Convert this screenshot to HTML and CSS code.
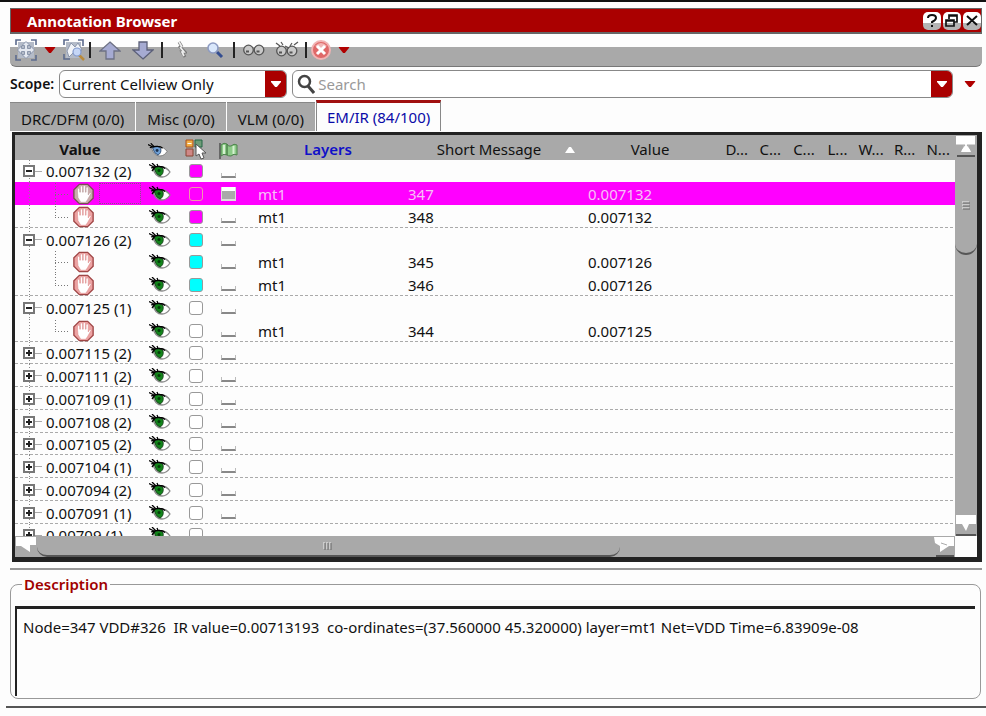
FILE: index.html
```html
<!DOCTYPE html>
<html lang="en">
<head>
<meta charset="utf-8">
<title>Annotation Browser</title>
<link rel="stylesheet" href="styles.css">
</head>
<body>
<svg class="defs" aria-hidden="true">
  <symbol id="eye" viewBox="0 0 22 16">
    <path d="M4 5c1 5 4 9 9 9 4 0 6-2 8-5-2-3-5-5-9-5-3-1-6 0-8 1z" fill="#fff" stroke="#888" stroke-width="1.300"/>
    <path d="M5 5q6-3 9 1 1 5-3 7-4-1-6-8z" fill="#12851a" stroke="#1c4a20"/>
    <circle cx="10" cy="7.500" r="1.500" fill="#053b08"/>
    <path d="M0 1.500l6 3M3 0l4 4M8 1l1 2.500M2 5q5-2 9-1.500 3 0 5 2M3 8l3-4" fill="none" stroke="#000" stroke-width="1.300"/>
  </symbol>
  <symbol id="hand" viewBox="0 0 24 24">
    <path d="M7.500 1.500h9l6 6v9l-6 6h-9l-6-6v-9z" fill="#eda3a3" stroke="#a04646" stroke-width="1.500"/>
    <path class="palm" d="M5.500 11V6.500q1.200-1.500 2.400 0V10h.7V4q1.200-1.500 2.400 0v6h.7V3.500q1.200-1.500 2.400 0V10h.7V5q1.200-1.500 2.400 0v8l1.500-2.500q1.800-.5 1.500 1L16.500 18l-2 3H9l-3-5z" fill="#fff" stroke="#dc8c8c" stroke-width=".6"/>
  </symbol>
  <symbol id="glasses" viewBox="0 0 22 12">
    <g fill="#c9c9c9" stroke="#555" stroke-width="1.3"><circle cx="5.500" cy="6" r="4.800"/><circle cx="16" cy="6" r="4.800"/></g>
    <path d="M3 7.500h3M13.500 7.500h3" stroke="#555" stroke-width="2"/>
  </symbol>
  <symbol id="down" viewBox="0 0 12 7"><path d="M0 0h12v1L7 7H5L0 1z"/></symbol>
</svg>

<main class="dock">
  <header class="title">
    <h1>Annotation Browser</h1>
    <button aria-label="Help"><svg viewBox="0 0 18 18"><path d="M5 6q0-3 4-3t4 3q0 2-4 4v1M9 13v2" fill="none" stroke="#111" stroke-width="2"/></svg></button>
    <button aria-label="Float"><svg viewBox="0 0 18 18"><path d="M6 7V3h8v7h-3M6 4h8M3 8h8v6H3zM3 9h8" fill="none" stroke="#111" stroke-width="1.700"/></svg></button>
    <button aria-label="Close"><svg viewBox="0 0 18 18"><path d="M4 4l10 9M14 4L4 13" stroke="#111" stroke-width="2"/></svg></button>
  </header>

  <div class="toolbar" role="toolbar" aria-label="Annotation tools">
    <button aria-label="Fit view"><svg width="22" height="22" viewBox="0 0 22 22"><path d="M3 3h16v16H3z" fill="#b4bbc8"/><path d="M1 6V1h5M16 1h5v5M21 16v5h-5M6 21H1v-5" fill="none" stroke="#5d6c8e" stroke-width="1.600"/><path d="M11 2.500l4 4h-2.500v3h3V7l4 4-4 4v-2.500h-3v3H15l-4 4-4-4h2.500v-3h-3V15l-4-4 4-4v2.500h3v-3H7z" fill="#e4e8f0" stroke="#7b88a0" stroke-width=".8"/></svg></button>
    <button class="menu" aria-label="Fit options"><svg width="12" height="6"><use href="#down"/></svg></button>
    <button aria-label="Zoom to selection"><svg width="22" height="22" viewBox="0 0 22 22"><path d="M3 3h15v16H3z" fill="#b4bbc8"/><path d="M1 6V1h5M15 1h5v6M7 20H1v-5" fill="none" stroke="#5d6c8e" stroke-width="1.600"/><path d="M4 12l4-8 4 4 3-4 4 7-8 2-5 5z" fill="#f2f4f8" stroke="#7b88a0" stroke-width=".8"/><path d="M16 16l5 5" stroke="#b98a3a" stroke-width="2.500"/><circle cx="14" cy="13" r="4" fill="#c5d6f6" stroke="#8299cc" stroke-width="1.200"/></svg></button>
    <span class="bar"></span>
    <button class="wide" aria-label="Previous"><svg width="22" height="19" viewBox="0 0 22 19"><path d="M11 1l10 9h-6v8H7v-8H1z" fill="#a6abd2" stroke="#6d7184" stroke-width="1.300"/></svg></button>
    <button class="wide" aria-label="Next"><svg width="22" height="19" viewBox="0 0 22 19"><path d="M11 18l10-9h-6V1H7v8H1z" fill="#a6abd2" stroke="#5c6079" stroke-width="1.300"/></svg></button>
    <span class="bar"></span>
    <button class="wide" aria-label="Probe"><svg width="10" height="18" viewBox="0 0 10 18"><path d="M2 1l3 5M2 5l6 6H5l3 5" fill="none" stroke="#777" stroke-width="3"/><path d="M2 1l3 5M3 6l4 5H5l2 4" fill="none" stroke="#eee" stroke-width="1.700"/></svg></button>
    <button class="wide" aria-label="Find"><svg width="18" height="18" viewBox="0 0 18 18"><path d="M11 11l5 5" stroke="#334d91" stroke-width="3"/><circle cx="7" cy="7" r="5" fill="#d9e7fb" stroke="#8d9bc2" stroke-width="1.600"/></svg></button>
    <span class="bar"></span>
    <button class="wide" aria-label="Show"><svg width="22" height="12"><use href="#glasses"/></svg></button>
    <button class="wide" aria-label="Hide"><svg width="24" height="18" viewBox="0 0 24 18"><use href="#glasses" x="1" y="4" width="22" height="12"/><path d="M1 2l4 3M23 1l-4 3M6 1l2 3M17 2l-2 3M10 5l4 2" stroke="#555" stroke-width="1.200"/></svg></button>
    <span class="bar"></span>
    <button aria-label="Delete"><svg width="20" height="20" viewBox="0 0 20 20"><circle cx="10" cy="10" r="9" fill="#df6868" stroke="#f1b3b3" stroke-width="2"/><path d="M4 6q6-6 12 0L10 9z" fill="#f2b5b5"/><path d="M6 6l8 8M14 6l-8 8" stroke="#fff" stroke-width="3"/></svg></button>
    <button class="menu" aria-label="Delete options"><svg width="12" height="6"><use href="#down"/></svg></button>
  </div>

  <div class="filters">
    <label for="scope">Scope:</label>
    <span class="field scope">
      <select id="scope"><option>Current Cellview Only</option></select>
      <span class="drop"><svg width="10" height="6"><use href="#down"/></svg></span>
    </span>
    <span class="field search">
      <svg class="lens" width="18" height="20" viewBox="0 0 18 20"><path d="M11 12l6 7" stroke="#444" stroke-width="3"/><circle cx="7.500" cy="7.500" r="5.500" fill="none" stroke="#444" stroke-width="2.500"/></svg>
      <input type="text" placeholder="Search" aria-label="Search">
      <button class="drop" aria-label="Search history"><svg width="10" height="6"><use href="#down"/></svg></button>
    </span>
    <button class="menu more" aria-label="Search options"><svg width="12" height="6"><use href="#down"/></svg></button>
  </div>

  <div class="tabs" role="tablist">
    <button role="tab">DRC/DFM (0/0)</button>
    <button role="tab">Misc (0/0)</button>
    <button role="tab">VLM (0/0)</button>
    <button role="tab" aria-selected="true">EM/IR (84/100)</button>
  </div>

  <section class="frame">
    <div class="view">
      <table>
        <colgroup><col class="c-tree"><col class="c-eye"><col class="c-color"><col class="c-flag"><col class="c-layer"><col class="c-msg"><col class="c-value"><col><col><col><col><col><col><col></colgroup>
        <thead>
          <tr>
            <th class="strong">Value</th>
            <th><svg width="20" height="15" viewBox="0 0 22 16" aria-label="Visible"><path d="M4 5c1 5 4 9 9 9 4 0 6-2 8-5-2-3-5-5-9-5-3-1-6 0-8 1z" fill="#fff" stroke="#777"/><path d="M5 5q6-3 9 1 1 5-3 7-4-1-6-8z" fill="#6f9fd4" stroke="#2d4a70"/><circle cx="10" cy="8" r="1.600" fill="#1d3350"/><path d="M0 1.500l6 3M3 0l4 4M2 5q5-2 9-1.500 3 0 5 2" fill="none" stroke="#000" stroke-width="1.300"/></svg></th>
            <th><svg width="22" height="21" viewBox="0 0 22 21" aria-label="Color"><path d="M1 1h7v7H1z" fill="#f0ad45" stroke="#a8501c"/><path d="M2.500 4.500h4" stroke="#fff"/><path d="M10 1h7v7h-7z" fill="#6f9c78" stroke="#264"/><path d="M1 10h7v7H1z" fill="#cf8886" stroke="#843"/><path d="M11 5v12l3-2 2 5 3-1-2-5h4z" fill="#fff" stroke="#555"/></svg></th>
            <th class="left"><svg width="19" height="17" viewBox="0 0 19 17" aria-label="Flag"><path d="M1 1v16" stroke="#444" stroke-width="1.300"/><path d="M2 3q3-3 6-1v11q-3-2-6 1zM8 2q1 3 4 2 3-3 6-1v10q-3-2-6 1-3 0-4-1z" fill="#8ccb88" stroke="#4c824b"/><path d="M5 3v9M14.500 4v8" stroke="#d5f0d0" stroke-width="2"/></svg></th>
            <th class="blue">Layers</th>
            <th class="sorted"><span>Short Message</span><svg width="10" height="6" viewBox="0 0 10 6"><path d="M0 6l4-6h2l4 6z" fill="#fff"/></svg></th>
            <th>Value</th><th>D...</th><th>C...</th><th>C...</th><th>L...</th><th>W...</th><th>R...</th><th>N...</th>
          </tr>
        </thead>
        <tbody>
          <tr><td class="node"><div><button class="box" aria-label="Collapse"></button><span>0.007132 (2)</span></div></td><td><svg class="eye"><use href="#eye"/></svg></td><td><input type="checkbox" class="color magenta" aria-label="Color"></td><td><input type="checkbox" class="flag" aria-label="Flag"></td><td colspan="10"></td></tr>
          <tr class="selected"><td class="node leaf"><div><i></i><svg class="hand"><use href="#hand"/></svg><b></b></div></td><td><svg class="eye"><use href="#eye"/></svg></td><td><input type="checkbox" class="color magenta" aria-label="Color"></td><td><input type="checkbox" class="flag" aria-label="Flag" checked></td><td>mt1</td><td>347</td><td>0.007132</td><td colspan="7"></td></tr>
          <tr class="end"><td class="node leaf"><div><i class="last"></i><svg class="hand"><use href="#hand"/></svg></div></td><td><svg class="eye"><use href="#eye"/></svg></td><td><input type="checkbox" class="color magenta" aria-label="Color"></td><td><input type="checkbox" class="flag" aria-label="Flag"></td><td>mt1</td><td>348</td><td>0.007132</td><td colspan="7"></td></tr>
          <tr><td class="node"><div><button class="box" aria-label="Collapse"></button><span>0.007126 (2)</span></div></td><td><svg class="eye"><use href="#eye"/></svg></td><td><input type="checkbox" class="color cyan" aria-label="Color"></td><td><input type="checkbox" class="flag" aria-label="Flag"></td><td colspan="10"></td></tr>
          <tr><td class="node leaf"><div><i></i><svg class="hand"><use href="#hand"/></svg></div></td><td><svg class="eye"><use href="#eye"/></svg></td><td><input type="checkbox" class="color cyan" aria-label="Color"></td><td><input type="checkbox" class="flag" aria-label="Flag"></td><td>mt1</td><td>345</td><td>0.007126</td><td colspan="7"></td></tr>
          <tr class="end"><td class="node leaf"><div><i class="last"></i><svg class="hand"><use href="#hand"/></svg></div></td><td><svg class="eye"><use href="#eye"/></svg></td><td><input type="checkbox" class="color cyan" aria-label="Color"></td><td><input type="checkbox" class="flag" aria-label="Flag"></td><td>mt1</td><td>346</td><td>0.007126</td><td colspan="7"></td></tr>
          <tr><td class="node"><div><button class="box" aria-label="Collapse"></button><span>0.007125 (1)</span></div></td><td><svg class="eye"><use href="#eye"/></svg></td><td><input type="checkbox" class="color" aria-label="Color"></td><td><input type="checkbox" class="flag" aria-label="Flag"></td><td colspan="10"></td></tr>
          <tr class="end"><td class="node leaf"><div><i class="last"></i><svg class="hand"><use href="#hand"/></svg></div></td><td><svg class="eye"><use href="#eye"/></svg></td><td><input type="checkbox" class="color" aria-label="Color"></td><td><input type="checkbox" class="flag" aria-label="Flag"></td><td>mt1</td><td>344</td><td>0.007125</td><td colspan="7"></td></tr>
          <tr class="end"><td class="node"><div><button class="box closed" aria-label="Expand"></button><span>0.007115 (2)</span></div></td><td><svg class="eye"><use href="#eye"/></svg></td><td><input type="checkbox" class="color" aria-label="Color"></td><td><input type="checkbox" class="flag" aria-label="Flag"></td><td colspan="10"></td></tr>
          <tr class="end"><td class="node"><div><button class="box closed" aria-label="Expand"></button><span>0.007111 (2)</span></div></td><td><svg class="eye"><use href="#eye"/></svg></td><td><input type="checkbox" class="color" aria-label="Color"></td><td><input type="checkbox" class="flag" aria-label="Flag"></td><td colspan="10"></td></tr>
          <tr class="end"><td class="node"><div><button class="box closed" aria-label="Expand"></button><span>0.007109 (1)</span></div></td><td><svg class="eye"><use href="#eye"/></svg></td><td><input type="checkbox" class="color" aria-label="Color"></td><td><input type="checkbox" class="flag" aria-label="Flag"></td><td colspan="10"></td></tr>
          <tr class="end"><td class="node"><div><button class="box closed" aria-label="Expand"></button><span>0.007108 (2)</span></div></td><td><svg class="eye"><use href="#eye"/></svg></td><td><input type="checkbox" class="color" aria-label="Color"></td><td><input type="checkbox" class="flag" aria-label="Flag"></td><td colspan="10"></td></tr>
          <tr class="end"><td class="node"><div><button class="box closed" aria-label="Expand"></button><span>0.007105 (2)</span></div></td><td><svg class="eye"><use href="#eye"/></svg></td><td><input type="checkbox" class="color" aria-label="Color"></td><td><input type="checkbox" class="flag" aria-label="Flag"></td><td colspan="10"></td></tr>
          <tr class="end"><td class="node"><div><button class="box closed" aria-label="Expand"></button><span>0.007104 (1)</span></div></td><td><svg class="eye"><use href="#eye"/></svg></td><td><input type="checkbox" class="color" aria-label="Color"></td><td><input type="checkbox" class="flag" aria-label="Flag"></td><td colspan="10"></td></tr>
          <tr class="end"><td class="node"><div><button class="box closed" aria-label="Expand"></button><span>0.007094 (2)</span></div></td><td><svg class="eye"><use href="#eye"/></svg></td><td><input type="checkbox" class="color" aria-label="Color"></td><td><input type="checkbox" class="flag" aria-label="Flag"></td><td colspan="10"></td></tr>
          <tr class="end"><td class="node"><div><button class="box closed" aria-label="Expand"></button><span>0.007091 (1)</span></div></td><td><svg class="eye"><use href="#eye"/></svg></td><td><input type="checkbox" class="color" aria-label="Color"></td><td><input type="checkbox" class="flag" aria-label="Flag"></td><td colspan="10"></td></tr>
          <tr class="end"><td class="node"><div><button class="box closed" aria-label="Expand"></button><span>0.00709 (1)</span></div></td><td><svg class="eye"><use href="#eye"/></svg></td><td><input type="checkbox" class="color" aria-label="Color"></td><td><input type="checkbox" class="flag" aria-label="Flag"></td><td colspan="10"></td></tr>
        </tbody>
      </table>
    </div>
    <div class="vscroll">
      <button aria-label="Scroll up"><svg width="22" height="24" viewBox="0 0 22 24"><path d="M1 1h19v9h-7l3 7H6l3-7H1z" fill="#fff"/><path d="M5 16l5-6H1M17 16l-5-6h8" fill="none" stroke="#a9a9a9"/><path d="M2 21h18" stroke="#555" stroke-width="2"/></svg></button>
      <div class="thumb"><svg width="8" height="10" viewBox="0 0 8 10"><path d="M0 1h7M0 4h7M0 7h7" stroke="#eee"/><path d="M1 2h7M1 5h7M1 8h7" stroke="#666"/></svg></div>
      <button aria-label="Scroll down"><svg width="22" height="22" viewBox="0 0 22 22"><path d="M1 1h20v9h-7l-3 7-4-7H1z" fill="#fff"/><path d="M1 21h20" stroke="#555" stroke-width="2"/></svg></button>
    </div>
    <div class="hscroll">
      <button aria-label="Scroll left"><svg width="22" height="21" viewBox="0 0 22 21"><path d="M1 1h20v8h-6v7l-9-6H1z" fill="#fff"/></svg></button>
      <div class="thumb"><svg width="10" height="8" viewBox="0 0 10 8"><path d="M1 0v7M4 0v7M7 0v7" stroke="#eee"/><path d="M2 1v7M5 1v7M8 1v7" stroke="#666"/></svg></div>
      <button aria-label="Scroll right"><svg width="22" height="21" viewBox="0 0 22 21"><path d="M1 1h20v9h-5l-9 6v-6l-5-3z" fill="#fff"/><path d="M8 7l6 2" fill="none" stroke="#aaa"/><path d="M3 20h18" stroke="#555" stroke-width="2"/></svg></button>
    </div>
  </section>

  <hr>

  <fieldset>
    <legend>Description</legend>
    <textarea readonly aria-label="Description">Node=347 VDD#326  IR value=0.00713193  co-ordinates=(37.560000 45.320000) layer=mt1 Net=VDD Time=6.83909e-08</textarea>
  </fieldset>
</main>
</body>
</html>
```
FILE: styles.css
```css
* { box-sizing: border-box; }

body {
  margin: 0;
  background: #fdfdfd;
  color: #111;
  font: 15px/20px "Noto Sans", "Open Sans", sans-serif;
}

button, input, select, textarea { font: inherit; color: inherit; margin: 0; padding: 0; border: 0; background: none; }
svg { display: block; flex: none; }
.defs { position: absolute; width: 0; height: 0; }

.dock {
  display: flex;
  flex-direction: column;
  height: 100vh;
  min-height: 480px;
  padding: 6px 4px 8px 10px;
  border-top: 2px solid #111;
  background: linear-gradient(#555, #555) 6px calc(100% - 8px) / 100% 2px no-repeat;
}

.title {
  display: flex;
  align-items: center;
  gap: 2px;
  height: 26px;
  padding: 0 0 0 16px;
  border: 1px solid #666;
  border-width: 1px 1px 2px;
  background: #aa0000;
  color: #fff;
}
.title h1 { flex: 1; margin: 0; font-size: 15px; line-height: 22px; }
.title button { width: 18px; height: 18px; border-radius: 5px; background: linear-gradient(#fff 60%, #b4b4b4 60%); }

.toolbar {
  display: flex;
  align-items: center;
  gap: 4px;
  height: 29px;
  margin-top: 4px;
  padding: 0 5px 4px;
  border-bottom: 1px solid #777;
  border-radius: 0 6px 6px;
  background: linear-gradient(transparent 9px, #a9a9a9 9px);
}
.toolbar button { display: flex; align-items: center; justify-content: center; }
.toolbar .wide { width: 29px; }
.toolbar .bar { width: 2px; height: 16px; background: #222; }
.menu { fill: #b00000; }
.toolbar .menu { width: 18px; }

.filters { display: flex; align-items: center; gap: 5px; height: 29px; margin-top: 2px; }
.filters label { font-size: 14px; font-weight: 600; }
.field {
  display: flex;
  align-items: center;
  height: 28px;
  border: 1px solid #888;
  border-radius: 6px;
  background: #fff;
  overflow: hidden;
}
.scope { position: relative; width: 228px; }
.scope select { flex: 1; height: 100%; padding-left: 2px; appearance: none; }
.drop { display: flex; align-items: center; justify-content: center; width: 21px; height: 100%; background: #aa0000; fill: #fff; }
.scope .drop { position: absolute; right: 0; top: 0; pointer-events: none; }
.search { flex: 1; }
.lens { margin: 0 3px 0 4px; }
.search input { flex: 1; min-width: 0; outline: 0; }
.search input::placeholder { color: #999; opacity: 1; }
.more { display: flex; justify-content: center; width: 24px; }

.tabs { display: flex; align-items: flex-end; gap: 1px; height: 32px; margin-top: 1px; }
.tabs button { height: 29px; padding: 4px 11px 0; border-top: 1px solid #888; background: #a9a9a9; }
.tabs [aria-selected] { height: 31px; padding: 0 10px; border: 1px solid #888; border-width: 3px 1px 0; border-top-color: #a01010; background: #fdfdfd; color: #0a0aa8; }

.frame {
  display: grid;
  grid-template: minmax(0, 1fr) 21px / minmax(0, 1fr) 22px;
  flex: 1;
  min-height: 0;
  margin: 1px 0 0 2px;
  border: solid #222;
  border-width: 3px 5px 5px 3px;
}
.view { overflow: hidden; }

table { width: 100%; table-layout: fixed; border-collapse: collapse; }
.c-tree { width: 126px; }
.c-eye { width: 33px; }
.c-color { width: 43px; }
.c-flag { width: 33px; }
.c-layer { width: 150px; }
.c-msg { width: 180px; }
.c-value { width: 140px; }

th { height: 25px; padding: 2px 0 0; background: #a9a9a9; font-weight: 400; text-align: center; }
th svg { display: inline-block; vertical-align: middle; }
th.strong { padding-left: 4px; font-weight: 700; }
th.blue { padding-left: 6px; color: #1010c8; font-weight: 600; }
th.left { padding-left: 2px; text-align: left; }
.sorted span { margin: 0 24px 0 32px; }

td { height: 23px; padding: 0 0 0 8px; line-height: 22px; white-space: nowrap; }
tr:nth-child(4n + 1) td { height: 22px; }
td > * { display: block; }
.end, thead tr { background: repeating-linear-gradient(90deg, #aaa 0 3px, transparent 3px 5px) 0 100% / 100% 1px no-repeat; }
.selected { background: #f0f; color: #f7c0f7; }

td.node {
  padding: 0;
  background: repeating-linear-gradient(#888 0 1px, transparent 1px 3px) 14px 0 / 1px 100% no-repeat;
}
.node div { display: flex; align-items: center; height: 22px; padding-left: 8px; }
.box {
  width: 12px;
  height: 12px;
  border: 2px solid #777;
  background: linear-gradient(#222, #222) center / 6px 2px no-repeat, #fff;
}
.box + span { padding-left: 11px; background: linear-gradient(#aaa, #aaa) 0 50% / 7px 1px no-repeat; }
.box.closed { background: linear-gradient(#222, #222) center / 6px 2px no-repeat, linear-gradient(#222, #222) center / 2px 6px no-repeat, #fff; }
.node i {
  width: 14px;
  height: 22px;
  margin: 0 3px 0 32px;
  background:
    repeating-linear-gradient(#777 0 1px, transparent 1px 3px) 0 0 / 1px 100% no-repeat,
    repeating-linear-gradient(90deg, #777 0 1px, transparent 1px 3px) 0 11px / 100% 1px no-repeat;
}
.node .last {
  background:
    repeating-linear-gradient(#777 0 1px, transparent 1px 3px) 0 0 / 1px 11px no-repeat,
    repeating-linear-gradient(90deg, #777 0 1px, transparent 1px 3px) 0 11px / 100% 1px no-repeat;
}
.node b { flex: 1; height: 21px; margin-left: 4px; border: 1px dotted #855885; }
.hand { width: 23px; height: 22px; }
.selected .hand { filter: saturate(0.4); }
.eye { width: 22px; height: 16px; }

.color { width: 14px; height: 14px; margin-left: 7px; appearance: none; border: 1px solid #999; border-radius: 3px; background: #fff; }
.magenta { background: #f0f; }
.cyan { background: #0ff; }
.selected .color { border-color: #e9a; }
.flag { width: 15px; height: 5px; margin: 8px 0 0 -4px; appearance: none; border: 1px solid #bbb; border-width: 0 1px 2px; border-bottom-color: #888; }
.flag:checked { height: 14px; margin-top: 0; border-color: #ddd; background: linear-gradient(#fff 4px, #a9a9a9 4px); }

.vscroll, .hscroll { display: flex; background: #a9a9a9; }
.vscroll { flex-direction: column; justify-content: space-between; }
.hscroll { justify-content: space-between; }
.thumb { display: flex; align-items: center; justify-content: center; }
.vscroll .thumb { height: 24%; margin-bottom: auto; border-bottom: 2px solid #555; border-radius: 0 0 11px 11px; }
.hscroll .thumb { width: 62%; margin-right: auto; border-bottom: 2px solid #555; border-radius: 0 0 10px 10px; }

hr { flex: none; width: 100%; height: 2px; margin: 6px 0 4px; border: 0; background: #999; }

fieldset {
  flex: none;
  display: flex;
  min-width: 0;
  margin: 0 1px 9px 0;
  padding: 12px 5px 2px 4px;
  border: 1px solid #999;
  border-radius: 8px;
}
legend { margin-left: 7px; padding: 0 2px; color: #a00000; font-weight: 600; }
textarea {
  flex: 1;
  height: 90px;
  padding: 8px 6px;
  border: solid #222;
  border-width: 3px 0 0 2px;
  resize: none;
  outline: 0;
}
```
